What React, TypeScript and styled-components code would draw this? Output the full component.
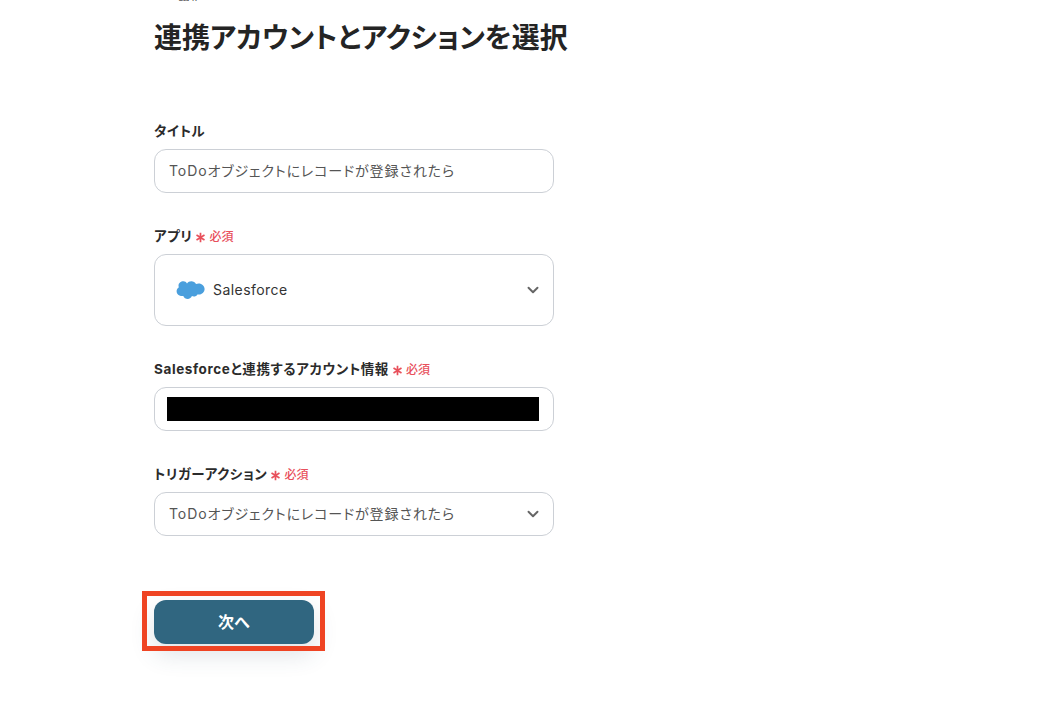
import React from "react";
import styled, { createGlobalStyle } from "styled-components";
import { ChevronDown } from "lucide-react";

const Global = createGlobalStyle`
  html, body { margin: 0; padding: 0; background: #fff; }
  body {
    width: 1050px;
    height: 706px;
    overflow: hidden;
    font-family: Inter, "Noto Sans CJK JP", sans-serif;
    font-feature-settings: "palt";
  }
`;

const Page = styled.main`
  display: flex;
  flex-direction: column;
  align-items: flex-start;
  padding-left: 154px;
  height: 706px;
  box-sizing: border-box;
  overflow: hidden;
`;

const Step = styled.div`
  height: 1px;
  margin-left: 24px;
  overflow: hidden;
  font-size: 12px;
  line-height: 1px;
  color: #555;
`;

const Heading = styled.h1`
  margin: 16px 0 0;
  font-size: 28px;
  line-height: 42px;
  font-weight: 700;
  color: #242424;
  font-family: inherit;
`;

const Form = styled.form`
  display: flex;
  flex-direction: column;
  gap: 34px;
  width: 400px;
  margin-top: 63px;
`;

const Field = styled.div`
  display: flex;
  flex-direction: column;
  gap: 9px;
`;

const LabelRow = styled.div`
  display: flex;
  align-items: center;
  height: 18px;
  gap: 3px;
`;

const Label = styled.label`
  font-size: 13.5px;
  line-height: 18px;
  font-weight: 700;
  letter-spacing: 0.6px;
  color: #2b2b2b;
`;

const Required = styled.span`
  display: flex;
  align-items: center;
  gap: 3px;
  margin-top: 2px;
  font-size: 12px;
  line-height: 18px;
  font-weight: 500;
  color: #e8505b;
`;

const Box = styled.div<{ $tall?: boolean; $masked?: boolean }>`
  display: flex;
  align-items: center;
  justify-content: space-between;
  box-sizing: border-box;
  height: ${(p) => (p.$tall ? "72px" : "44px")};
  padding: ${(p) => (p.$tall ? "0 11px 0 21px" : p.$masked ? "0 14px 0 12px" : "0 11px 0 14px")};
  border: 1px solid #ccd0d6;
  border-radius: 12px;
  background: #fff;
`;

const Value = styled.span`
  font-size: 14px;
  line-height: 20px;
  color: #555;
  letter-spacing: 0.9px;
`;

const AppValue = styled.span`
  display: flex;
  align-items: center;
  gap: 8px;
  font-size: 14px;
  line-height: 18px;
  color: #333;
  letter-spacing: 0.45px;
`;

const Redacted = styled.div`
  flex: 1;
  height: 24px;
  background: #000;
`;

const Chevron = styled(ChevronDown).attrs({ strokeWidth: 2.6 })`
  width: 18px;
  height: 18px;
  color: #666;
  flex: none;
`;

const ButtonWrap = styled.div`
  position: relative;
  margin-top: 64px;
`;

const NextButton = styled.button`
  display: block;
  width: 160px;
  height: 44px;
  padding: 0 0 2px;
  border: 0;
  border-radius: 12px;
  background: #306680;
  color: #fff;
  font-family: inherit;
  font-size: 16px;
  font-weight: 700;
  box-shadow: 0 10px 24px rgba(48, 80, 100, 0.16);
`;

const Highlight = styled.div`
  position: absolute;
  left: -12px;
  top: -9px;
  width: 183px;
  height: 60px;
  box-sizing: border-box;
  border: 5px solid #ef4423;
  pointer-events: none;
`;

const Star = () => (
  <svg width="11" height="11" viewBox="0 0 11 11" aria-hidden="true">
    <path d="M5.500 .8v9.400M1.500 3.100l8 4.800M9.500 3.100l-8 4.800" stroke="#e8505b" strokeWidth="1.700" />
  </svg>
);

const Cloud = () => (
  <svg width="29" height="21" viewBox="0 0 29 21" aria-hidden="true">
    <path
      fill="#4a9fdd"
      d="M11 3.400C12 2.100 13.500 1.300 15.300 1.300c2 0 3.800 1.100 4.700 2.700.8-.4 1.700-.6 2.600-.6 3.400 0 6 2.500 6 5.500s-2.600 5.600-6 5.600c-.4 0-.8 0-1.200-.1-.7 1.300-2.100 2.100-3.600 2.100-.7 0-1.300-.2-1.900-.4-.7 1.700-2.300 2.900-4.200 2.900-2 0-3.700-1.200-4.400-3-.3.1-.7.1-1 .1C3 16 .6 14 .6 11.300c0-1.700.9-3.200 2.300-4-.3-.5-.4-1.100-.4-1.700 0-2.400 2.300-4.300 4.900-4.300 1.500 0 2.800.8 3.600 2.100z"
    />
  </svg>
);

const Req = () => (
  <Required>
    <Star />
    必須
  </Required>
);

export default function App() {
  return (
    <>
      <Global />
      <Page>
        <Step>設定</Step>
        <Heading>連携アカウントとアクションを選択</Heading>
        <Form>
          <Field>
            <LabelRow>
              <Label>タイトル</Label>
            </LabelRow>
            <Box>
              <Value>ToDoオブジェクトにレコードが登録されたら</Value>
            </Box>
          </Field>
          <Field>
            <LabelRow>
              <Label>アプリ</Label>
              <Req />
            </LabelRow>
            <Box $tall>
              <AppValue>
                <Cloud />
                Salesforce
              </AppValue>
              <Chevron />
            </Box>
          </Field>
          <Field>
            <LabelRow>
              <Label>Salesforceと連携するアカウント情報</Label>
              <Req />
            </LabelRow>
            <Box $masked>
              <Redacted />
            </Box>
          </Field>
          <Field>
            <LabelRow>
              <Label>トリガーアクション</Label>
              <Req />
            </LabelRow>
            <Box>
              <Value>ToDoオブジェクトにレコードが登録されたら</Value>
              <Chevron />
            </Box>
          </Field>
        </Form>
        <ButtonWrap>
          <NextButton type="button">次へ</NextButton>
          <Highlight />
        </ButtonWrap>
      </Page>
    </>
  );
}
